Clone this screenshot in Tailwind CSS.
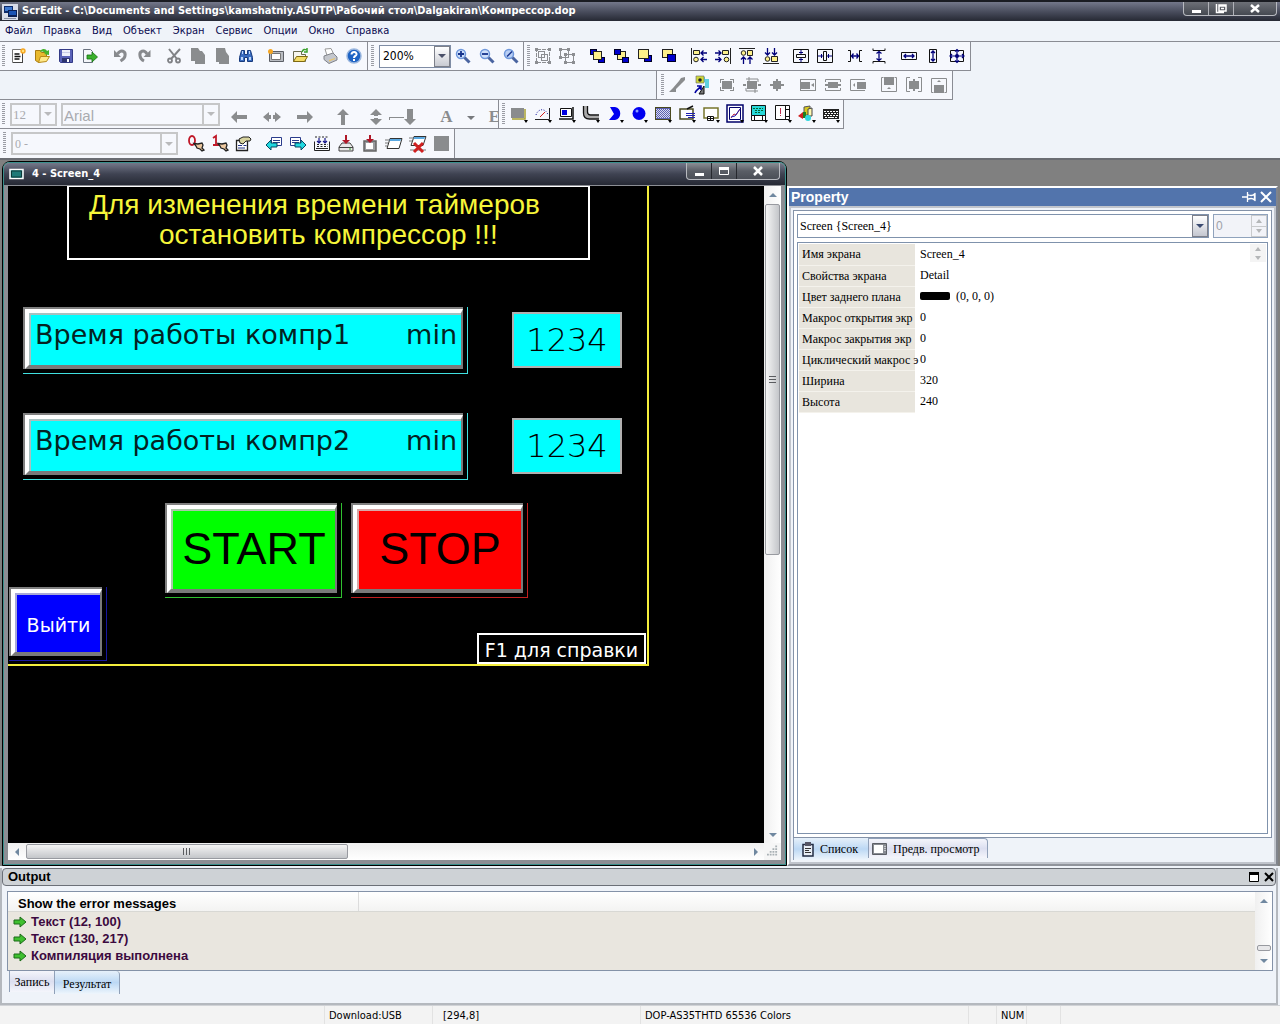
<!DOCTYPE html>
<html lang="ru">
<head>
    <meta charset="UTF-8">
    <meta name="viewport" content="width=device-width, initial-scale=1.0">
    <title>ScrEdit - Компрессор.dop</title>
    <script src="https://cdn.jsdelivr.net/npm/@tailwindcss/browser@4"></script>
</head>
<body class="flex flex-col h-screen overflow-hidden bg-[#eff3f9] font-['DejaVu_Sans_Condensed','DejaVu_Sans',sans-serif] text-[11px] text-black">

    <!-- Title bar -->
    <header class="flex h-[21px] shrink-0 justify-between border-t-2 border-[#1a1c22] bg-linear-to-b from-[#74788a] via-[#4a4e5e] to-[#262934] pl-[2px] pr-[3px]">
        <div class="flex items-center gap-1">
            <svg class="size-4" viewBox="0 0 16 16"><path fill="#d8dce8" d="M0 0h16v16H0z"/><path fill="#0d2b6b" d="M2 2h9v7H2z"/><path fill="#3f79d0" d="M3 3h7v4H3z"/><path fill="#0a1f55" d="M6 6h9v7H6z"/><path fill="#1b54b5" d="M7 7h7v4H7z"/><path fill="#8890a5" d="M2 14h12v1H2z"/></svg>
            <h1 class="font-bold text-white whitespace-nowrap">ScrEdit - C:\Documents and Settings\kamshatniy.ASUTP\Рабочий стол\Dalgakiran\Компрессор.dop</h1>
        </div>
        <div class="flex h-[14px] rounded-b border border-t-0 border-[#b8bac0] bg-linear-to-b from-[#6d7077] to-[#454951] divide-x divide-[#b0b2b8] *:flex *:items-center *:justify-center">
            <button class="w-[25px]" aria-label="Свернуть"><svg class="h-3 w-3" viewBox="0 0 12 12"><path fill="#fff" d="M2 7h9v3H2z"/></svg></button>
            <button class="w-[25px]" aria-label="Восстановить"><svg class="h-3 w-3" viewBox="0 0 12 12"><path fill="none" stroke="#fff" stroke-width="1.5" d="M1.5 1v8.5H9M4 2h7v6H4zM4 3h7M6 5.500h3"/></svg></button>
            <button class="w-[42px]" aria-label="Закрыть"><svg class="h-3 w-3" viewBox="0 0 12 12"><path stroke="#fff" stroke-width="2.500" d="M2 2l8 7M10 2l-8 7"/></svg></button>
        </div>
    </header>

    <!-- Menu -->
    <nav class="flex h-[21px] shrink-0 items-center gap-[11px] border-b border-[#8a8c94] px-[5px] text-[#0a0a50]">
        <a href="#">Файл</a>
        <a href="#">Правка</a>
        <a href="#">Вид</a>
        <a href="#">Объект</a>
        <a href="#">Экран</a>
        <a href="#">Сервис</a>
        <a href="#">Опции</a>
        <a href="#">Окно</a>
        <a href="#">Справка</a>
    </nav>

    <!-- Toolbar row 1 -->
    <div class="flex h-[29px] shrink-0">
        <div class="flex items-center border-r border-b border-[#8a8c94] bg-[#f6f8fd] pl-[6px] relative before:absolute before:left-[2px] before:top-[3px] before:h-[22px] before:w-[3px] before:bg-[repeating-linear-gradient(#9a9ca4_0_1px,transparent_1px_2px)] [&>button]:flex [&>button]:w-6 [&>button]:justify-center [&_svg]:size-4">
            <button title="Новый"><svg viewBox="0 0 16 16"><path fill="#fff" stroke="#777" d="M2.500 1.500h10v13h-10z"/><path stroke="#111" stroke-width="1.300" d="M4.500 6h5M4.500 8.500h6M4.500 11h5"/><path stroke="#444" d="M12.500 4v11M3 14.500h10"/><circle cx="13" cy="3" r="2.700" fill="#f5a623"/><circle cx="13" cy="3" r="1.200" fill="#ffe27a"/></svg></button>
            <button title="Открыть"><svg viewBox="0 0 16 16"><path fill="#e8b92e" stroke="#a87b12" d="M1.500 2.500h5l1 2h5v7l-8 3-3-2z"/><path fill="#ffe98a" stroke="#b88a18" d="M4.500 14.500l2-6h9l-3 5z"/><path fill="#46b32e" d="M6 3c3-3 6-2 7 0l2-1v5l-5-1 1.500-1C10 4 8 3 6 4z"/></svg></button>
            <button title="Сохранить"><svg viewBox="0 0 16 16"><path fill="#5a62b8" stroke="#333a86" d="M1.500 1.500h13v13h-12l-1-1z"/><path fill="#eef0fa" d="M4 2h8v6H4z"/><path fill="#c9cde8" d="M4 4h8v1H4z"/><path fill="#2e356f" d="M4 10h8v4H4z"/><path fill="#fff" d="M9 11h2v3H9z"/></svg></button>
            <button title="Экспорт"><svg viewBox="0 0 16 16"><path fill="#f4f6fa" stroke="#6a7280" d="M1.500 1.500h7l2 2v11h-9z"/><path fill="#3ab02c" stroke="#136e12" stroke-width=".8" d="M5 7h5V4l5.500 5L10 14v-3H5z"/></svg></button>
            <button class="ml-[6px]" title="Отменить"><svg viewBox="0 0 16 16"><path fill="none" stroke="#888a8e" stroke-width="3" d="M5.500 6C9 1 14 3 13 8c-.5 3-3 4-4.500 5"/><path fill="#888a8e" d="M2 2v7h7z"/></svg></button>
            <button title="Вернуть"><svg viewBox="0 0 16 16"><path fill="none" stroke="#888a8e" stroke-width="3" d="M11 6C8 1 3 3 4 8c.5 3 2 4 4 5"/><path fill="#888a8e" d="M14.500 2v7h-7z"/></svg></button>
            <button class="ml-[6px]" title="Вырезать"><svg viewBox="0 0 16 16"><path stroke="#808286" stroke-width="2" d="M3 1l8 10M14 1L5 11"/><circle cx="4" cy="12.500" r="2" fill="none" stroke="#808286" stroke-width="1.800"/><circle cx="12" cy="12.500" r="2" fill="none" stroke="#808286" stroke-width="1.800"/></svg></button>
            <button title="Копировать"><svg viewBox="0 0 16 16"><path fill="#8a8c8e" d="M1 0h7l2 3h2l3 4v9H5v-3H1z"/></svg></button>
            <button title="Вставить"><svg viewBox="0 0 16 16"><path fill="#8a8c8e" d="M2 0h9l1 4 3 4v8H5v-2H2z"/></svg></button>
            <button title="Найти"><svg viewBox="0 0 16 16"><path fill="#3a6cc0" stroke="#173a7d" d="M3.500 2.500h3v4h3v-4h3l2 7v4h-5v-4h-3v4h-5v-4z"/><path fill="#bcd6fa" d="M3 9h2v3H3zM11 9h2v3h-2zM4 3h1v3H4zM11 3h1v3h-1z"/></svg></button>
            <button class="ml-[6px]" title="Новый экран"><svg viewBox="0 0 16 16"><path fill="#b9bcc2" stroke="#5c5f66" d="M1.500 3.500h14v10h-14z"/><path fill="#fff" stroke="#777" d="M3.500 5.500h9v6h-9z"/><circle cx="2.500" cy="3.500" r="2.500" fill="#f5a623"/></svg></button>
            <button title="Открыть экран"><svg viewBox="0 0 16 16"><path fill="#f7f7f0" stroke="#6b6b50" d="M1.500 3.500h8v3h4v7h-12z"/><path fill="#f4dc66" stroke="#806a10" d="M1.500 13.500l3-5h11l-3 5z"/><path fill="none" stroke="#3aa02c" stroke-width="1.500" d="M10 4c1-3 3-3 4-2M15 0v4h-3"/></svg></button>
            <button class="ml-[6px]" title="Печать"><svg viewBox="0 0 16 16"><path fill="#fff" stroke="#999" d="M3 1l6-.5 3 6-7 1z"/><path fill="#c3c6cc" stroke="#80838a" d="M2 8l9-3 4 4v3l-8 3.500-5-4z"/><path fill="#e9c46a" d="M7 12l6-2v1l-6 2.500z"/></svg></button>
            <button class="mr-px" title="Справка"><svg viewBox="0 0 16 16"><circle cx="8" cy="8" r="7" fill="#1d63c4" stroke="#9ab6de" stroke-width="1.500"/><path fill="none" stroke="#fff" stroke-width="2" d="M5.500 6.500C5.500 3 11 3.500 10.500 6.500 10 8 8 8 8 10"/><path fill="#fff" d="M7 11h2v2H7z"/></svg></button>
        </div>
        <div class="flex items-center border-r border-b border-[#8a8c94] bg-[#f6f8fd] pl-[11px] relative before:absolute before:left-[3px] before:top-[3px] before:h-[22px] before:w-[3px] before:bg-[repeating-linear-gradient(#9a9ca4_0_1px,transparent_1px_2px)] [&>button]:flex [&>button]:w-6 [&>button]:justify-center [&_svg]:size-4">
            <div class="flex h-[23px] w-[72px] border border-[#7f8da5] bg-white">
                <select aria-label="Масштаб" class="min-w-0 flex-1 appearance-none bg-transparent px-[3px] text-[12px]"><option>200%</option></select>
                <span class="flex w-4 items-center justify-center border border-[#7d808a] bg-linear-to-b from-white to-[#c9cbd2]"><i class="border-x-4 border-t-4 border-x-transparent border-t-[#4a5068]"></i></span>
            </div>
            <button title="Увеличить"><svg viewBox="0 0 16 16"><circle cx="6" cy="6" r="4.500" fill="#cfe0fa" stroke="#6f98dc" stroke-width="1.500"/><path stroke="#16338c" stroke-width="1.800" d="M3 6h6M6 3v6"/><path stroke="#4a64a0" stroke-width="3" d="M9.500 9.500l5 5"/></svg></button>
            <button title="Уменьшить"><svg viewBox="0 0 16 16"><circle cx="6" cy="6" r="4.500" fill="#cfe0fa" stroke="#6f98dc" stroke-width="1.500"/><path stroke="#16338c" stroke-width="1.800" d="M3 6h6"/><path stroke="#4a64a0" stroke-width="3" d="M9.500 9.500l5 5"/></svg></button>
            <button title="Исходный масштаб"><svg viewBox="0 0 16 16"><circle cx="6" cy="6" r="4.500" fill="#b9cff4" stroke="#6f98dc" stroke-width="1.500"/><path stroke="#16338c" stroke-width="1.500" d="M4 8.500l5-5"/><path stroke="#4a64a0" stroke-width="3" d="M9.500 9.500l5 5"/></svg></button>
        </div>
        <div class="flex items-center border-r border-b border-[#8a8c94] bg-[#f6f8fd] pl-[7px] pr-px relative before:absolute before:left-[3px] before:top-[3px] before:h-[22px] before:w-[3px] before:bg-[repeating-linear-gradient(#9a9ca4_0_1px,transparent_1px_2px)] [&>button]:flex [&>button]:w-6 [&>button]:justify-center [&_svg]:size-4">
            <button title="Группировать"><svg viewBox="0 0 16 16" shape-rendering="crispEdges"><path fill="none" stroke="#8c8e92" d="M1.500 1.500h13v13h-13z" stroke-dasharray="4 1"/><path fill="none" stroke="#8c8e92" d="M3.500 3.500h6v6h-6zM6.500 6.500h6v6h-6z"/><path fill="#8c8e92" d="M0 0h3v3H0zM13 0h3v3h-3zM0 13h3v3H0zM13 13h3v3h-3z"/></svg></button>
            <button title="Разгруппировать"><svg viewBox="0 0 16 16" shape-rendering="crispEdges"><path fill="none" stroke="#8c8e92" d="M1.500 1.500h8v8h-8zM6.500 6.500h8v8h-8z"/><path fill="#8c8e92" d="M0 0h3v3H0zM8 0h3v3H8zM0 8h3v3H0zM5 5h3v3H5zM13 5h3v3h-3zM5 13h3v3H5zM13 13h3v3h-3z"/></svg></button>
            <button class="ml-[6px]" title="На передний план"><svg viewBox="0 0 16 16" shape-rendering="crispEdges"><path fill="#00c" stroke="#002" d="M1.500 1.500h6v5h-6zM9.500 9.500h6v5h-6z"/><path fill="#fdf08a" stroke="#222" d="M4.500 3.500h8v8h-8z"/></svg></button>
            <button title="На задний план"><svg viewBox="0 0 16 16" shape-rendering="crispEdges"><path fill="#fdf08a" stroke="#222" d="M4.500 3.500h8v8h-8z"/><path fill="#00c" stroke="#002" d="M1.500 1.500h6v5h-6zM9.500 9.500h6v5h-6z"/></svg></button>
            <button title="Переместить вперёд"><svg viewBox="0 0 16 16" shape-rendering="crispEdges"><path fill="#00c" stroke="#002" d="M7.500 7.500h7v6h-7z"/><path fill="#fdf08a" stroke="#222" d="M1.500 1.500h10v9h-10z"/></svg></button>
            <button title="Переместить назад"><svg viewBox="0 0 16 16" shape-rendering="crispEdges"><path fill="#fdf08a" stroke="#222" d="M1.500 1.500h10v8h-10z"/><path fill="#00c" stroke="#002" d="M6.500 6.500h8v7h-8z"/></svg></button>
            <button class="ml-[6px]" title="По левому краю"><svg viewBox="0 0 16 16"><path fill="none" stroke="#222" shape-rendering="crispEdges" d="M.5 0v16"/><path fill="#fdf08a" stroke="#222" d="M2.500 2.500h6v4h-6z"/><circle cx="5" cy="11.500" r="2.300" fill="#fdf08a" stroke="#222"/><path fill="none" stroke="#00007a" stroke-width="1.300" d="M10 5h6M12.500 2.500L10 5l2.500 2.500M10 11.500h6M12.500 9L10 11.500l2.500 2.500"/></svg></button>
            <button title="По правому краю"><svg viewBox="0 0 16 16"><path fill="none" stroke="#222" shape-rendering="crispEdges" d="M15.500 0v16"/><path fill="#fdf08a" stroke="#222" d="M7.500 2.500h6v4h-6z"/><circle cx="11.500" cy="11.500" r="2.300" fill="#fdf08a" stroke="#222"/><path fill="none" stroke="#00007a" stroke-width="1.300" d="M0 5h6M3.500 2.500L6 5 3.500 7.500M0 11.500h6M3.500 9L6 11.500 3.500 14"/></svg></button>
            <button title="По верхнему краю"><svg viewBox="0 0 16 16"><path stroke="#222" shape-rendering="crispEdges" d="M0 .5h16"/><circle cx="4.500" cy="5" r="2.300" fill="#fdf08a" stroke="#222"/><path fill="#fdf08a" stroke="#222" d="M8.500 2.500h5v5h-5z"/><path fill="none" stroke="#00007a" stroke-width="1.300" d="M4.500 9v7M2 11.500L4.500 9 7 11.500M11 9v7M8.500 11.500L11 9l2.500 2.500"/></svg></button>
            <button title="По нижнему краю"><svg viewBox="0 0 16 16"><path stroke="#222" shape-rendering="crispEdges" d="M0 15.500h16"/><circle cx="4.500" cy="11" r="2.300" fill="#fdf08a" stroke="#222"/><path fill="#fdf08a" stroke="#222" d="M8.500 8.500h6v5h-6z"/><path fill="none" stroke="#00007a" stroke-width="1.300" d="M4.500 0v7M2 4.500L4.500 7 7 4.500M11.500 0v7M9 4.500L11.500 7 14 4.500"/></svg></button>
            <button class="ml-[6px]" title="Центр по вертикали"><svg viewBox="0 0 16 16"><path fill="none" stroke="#111" d="M.5 1.500h15v13H.5zM3.500 6.500h9v3h-9z"/><path stroke="#00007a" d="M8 2v4M6 4.500h4M8 10v4M6 11.500h4"/></svg></button>
            <button title="Центр по горизонтали"><svg viewBox="0 0 16 16"><path fill="none" stroke="#111" d="M.5 1.500h15v13H.5zM6.500 3.500h3v9h-3z"/><path stroke="#00007a" d="M1 8h5M4.500 6v4M10 8h5M11.500 6v4"/></svg></button>
            <button class="ml-[6px]" title="Интервал по горизонтали"><svg viewBox="0 0 16 16"><path fill="none" stroke="#111" d="M1 2.500h2.500v11H1M15 2.500h-2.500v11H15"/><path fill="none" stroke="#00007a" stroke-width="1.300" d="M4 8h8M6.500 5.500L4.500 8l2 2.500M9.500 5.500l2 2.500-2 2.500"/></svg></button>
            <button title="Интервал по вертикали"><svg viewBox="0 0 16 16"><path fill="none" stroke="#111" d="M2 .5v2h12v-2M2 15.500v-2h12v2"/><path fill="none" stroke="#00007a" stroke-width="1.300" d="M8 3v10M5.500 5.500L8 3.500l2.500 2M5.500 10.500l2.500 2 2.500-2"/></svg></button>
            <button class="ml-[6px]" title="Одинаковая ширина"><svg viewBox="0 0 16 16"><path fill="none" stroke="#111" d="M.5 4.500h15v7H.5z"/><path fill="none" stroke="#00007a" stroke-width="1.300" d="M3 8h10M5 6L3 8l2 2M11 6l2 2-2 2"/></svg></button>
            <button title="Одинаковая высота"><svg viewBox="0 0 16 16"><path fill="none" stroke="#111" d="M4.500 1.500h7v13h-7z"/><path fill="none" stroke="#00007a" stroke-width="1.300" d="M8 3v10M6 5l2-2 2 2M6 11l2 2 2-2"/></svg></button>
            <button title="Одинаковый размер"><svg viewBox="0 0 16 16"><path fill="none" stroke="#111" d="M1.500 2.500h13v11h-13z"/><path fill="none" stroke="#00007a" stroke-width="1.200" d="M.5 8h15M3 6L1 8l2 2M13 6l2 2-2 2M8 1v14M6 3.500l2-2 2 2M6 12.500l2 2 2-2"/><circle cx="8" cy="8" r="2" fill="#00007a"/></svg></button>
        </div>
    </div>

    <!-- Toolbar row 2 -->
    <div class="flex h-[29px] shrink-0">
        <div class="w-[656px] border-b border-[#8a8c94]"></div>
        <div class="flex items-center border-x border-b border-[#8a8c94] bg-[#f6f8fd] pl-[7px] pr-px relative before:absolute before:left-[4px] before:top-[3px] before:h-[22px] before:w-[3px] before:bg-[repeating-linear-gradient(#9a9ca4_0_1px,transparent_1px_2px)] [&>button]:flex [&>button]:w-[25px] [&>button]:justify-center [&_svg]:size-4 [&_svg]:overflow-visible">
            <button title="Заливка"><svg viewBox="0 0 16 16"><path fill="#8a8c8e" d="M0 15l4-4 6-7 2-3 4-1v3l-3 3-6 6v3z"/></svg></button>
            <button title="Макрос"><svg viewBox="0 0 16 16"><path fill="#5fd0e0" d="M4 0h7v5H4zM11 2h4v9h-4z"/><path fill="#cfd83a" stroke="#666" stroke-width=".6" d="M2-1h8v7H2z"/><circle cx="6" cy="3" r="1.800" fill="#222"/><path fill="#777" stroke="#111" d="M5 17h5V9z"/><path fill="none" stroke="#0000a0" stroke-width="1.600" d="M1 16c1-3 3-3 5-6M3 9h4v4"/></svg></button>
            <button title="Обрезать"><svg viewBox="0 0 16 16"><path fill="#8a8c8e" d="M3 4h10v8H3zM1 2h4v1H2v3H1zM15 2h-4v1h3v3h1zM1 14h4v-1H2v-3H1zM15 14h-4v-1h3v-3h1z"/></svg></button>
            <button title="Повернуть"><svg viewBox="0 0 16 16"><path fill="#8a8c8e" d="M3 4h10v8H3zM-1 7h3v2h-3zM14 7h3v2h-3z"/><path stroke="#8a8c8e" fill="none" d="M2 2h12v3M14 14H2v-3M5 0v4M11 16v-4"/></svg></button>
            <button title="Подогнать"><svg viewBox="0 0 16 16"><path fill="#8a8c8e" d="M4 4h8v8H4zM1 7h14v2H1zM7 2h2v12H7z"/></svg></button>
            <button class="ml-[6px]" title="Влево"><svg viewBox="0 0 16 16"><path fill="none" stroke="#8a8c8e" d="M.5 2.500h15M.5 13.500h15M15.500 2v12M.5 2v12"/><path fill="#8a8c8e" d="M1 5h9v7H1zM11 8l3-2v4z"/></svg></button>
            <button title="По центру"><svg viewBox="0 0 16 16"><path fill="none" stroke="#8a8c8e" d="M.5 5V2.500h15V5M.5 11v2.500h15V11"/><path fill="#8a8c8e" d="M3 5h10v6H3zM0 7h16v2H0z"/></svg></button>
            <button title="Вправо"><svg viewBox="0 0 16 16"><path fill="none" stroke="#8a8c8e" d="M15 2.500H.5v11H15"/><path fill="#8a8c8e" d="M7 5h9v7H7zM3 8l2-2v4z"/></svg></button>
            <button class="ml-[6px]" title="Вверх"><svg viewBox="0 0 16 16"><path fill="none" stroke="#8a8c8e" d="M2.500.5h-2v14h15V.5h-2"/><path fill="#8a8c8e" d="M3 0h10v8H3zM6 12l2-2 2 2z"/></svg></button>
            <button title="Посередине"><svg viewBox="0 0 16 16"><path fill="none" stroke="#8a8c8e" d="M4 .5H.5v14H4M12 .5h3.500v14H12"/><path fill="#8a8c8e" d="M3 4h10v8H3zM7 2h2v12H7z"/></svg></button>
            <button title="Вниз"><svg viewBox="0 0 16 16"><path fill="none" stroke="#8a8c8e" d="M2.500 15.500h-2V1.500h15v14h-2"/><path fill="#8a8c8e" d="M3 8h10v8H3zM6 5l2-2 2 2z"/></svg></button>
        </div>
    </div>

    <!-- Toolbar row 3 -->
    <div class="flex h-[29px] shrink-0">
        <div class="flex w-[499px] items-center overflow-hidden border-r border-b border-[#8a8c94] bg-[#f6f8fd] pl-[10px] relative before:absolute before:left-[2px] before:top-[3px] before:h-[22px] before:w-[3px] before:bg-[repeating-linear-gradient(#9a9ca4_0_1px,transparent_1px_2px)] [&>button]:flex [&>button]:w-[33px] [&>button]:shrink-0 [&>button]:justify-center [&>button]:pt-[6px] [&_svg]:size-4 [&_svg]:overflow-visible">
            <div class="flex h-[23px] w-[47px] shrink-0 border-2 border-[#c6c7c8]">
                <select disabled aria-label="Размер шрифта" class="min-w-0 flex-1 appearance-none px-px font-['Liberation_Serif',serif] text-[13px] text-[#a9abb0]"><option>12</option></select>
                <span class="flex w-4 items-center justify-center border-l-2 border-[#c6c7c8]"><i class="border-x-4 border-t-4 border-x-transparent border-t-[#b9babc]"></i></span>
            </div>
            <div class="ml-1 mr-[2px] flex h-[23px] w-[159px] shrink-0 border-2 border-[#c6c7c8]">
                <select disabled aria-label="Шрифт" class="min-w-0 flex-1 appearance-none px-px font-['Liberation_Sans',sans-serif] text-[15px] text-[#a9abb0]"><option>Arial</option></select>
                <span class="flex w-4 items-center justify-center border-l-2 border-[#c6c7c8]"><i class="border-x-4 border-t-4 border-x-transparent border-t-[#b9babc]"></i></span>
            </div>
            <button title="Влево"><svg viewBox="0 0 16 16"><path fill="#8a8c8e" d="M0 8l6-6v4h10v4H6v4z"/></svg></button>
            <button title="По центру"><svg viewBox="0 0 16 16"><path fill="#8a8c8e" d="M-1 8l6-5v3h2v4H5v3zM17 8l-6-5v3H9v4h2v3z"/></svg></button>
            <button title="Вправо"><svg viewBox="0 0 16 16"><path fill="#8a8c8e" d="M16 8l-6-6v4H0v4h10v4z"/></svg></button>
            <button class="ml-[5px]" title="Вверх"><svg viewBox="0 0 16 16"><path fill="#8a8c8e" d="M8 0l6 6h-4v10H6V6H2z"/></svg></button>
            <button title="Посередине"><svg viewBox="0 0 16 16"><path fill="#8a8c8e" d="M8 0l6 6h-4v1H6V6H2zM8 16l6-6h-4V9H6v1H2z"/></svg></button>
            <button title="Вниз"><svg viewBox="0 0 16 16"><path fill="#8a8c8e" d="M9 16l6-6h-3V0H6v10H3zM-12 8H3v1h-14v2h-1z"/></svg></button>
            <button class="ml-[5px] font-['Liberation_Serif',serif] text-[17px]/5 font-bold text-[#8a8c8e]" title="Цвет текста">A</button>
            <button class="-mx-[9px]" title="Палитра"><i class="mt-[2px] border-x-4 border-t-4 border-x-transparent border-t-[#77797d]"></i></button>
            <button class="font-['Liberation_Serif',serif] text-[17px]/5 font-bold text-[#8a8c8e]" title="Выравнивание">E</button>
        </div>
        <div class="flex items-center border-r border-b border-[#8a8c94] bg-[#f6f8fd] pl-2 relative before:absolute before:left-[3px] before:top-[3px] before:h-[22px] before:w-[3px] before:bg-[repeating-linear-gradient(#9a9ca4_0_1px,transparent_1px_2px)] [&>button]:relative [&>button]:flex [&>button]:w-6 [&>button]:justify-center [&_svg]:size-4 [&_svg]:overflow-visible [&_i]:absolute [&_i]:-bottom-px [&_i]:right-[3px] [&_i]:border-x-2 [&_i]:border-t-3 [&_i]:border-x-transparent [&_i]:border-t-black">
            <button title="Кнопка"><svg viewBox="0 0 16 16"><path fill="#8a8c8e" d="M0 2h13v10H0z"/><path fill="none" stroke="#a8a030" stroke-width="1.500" d="M1 13h13V3"/></svg><i></i></button>
            <button title="Прибор"><svg viewBox="0 0 16 16"><path fill="none" stroke="#222" d="M0 13.500h14.500V2"/><path fill="none" stroke="#2020a0" stroke-dasharray="1 1.500" d="M1 9c2-7 10-7 12 0"/><path stroke="#d02020" d="M5 11l5-5"/></svg><i></i></button>
            <button title="Индикатор"><svg viewBox="0 0 16 16"><path fill="#fff" stroke="#111" d="M1.500 2.500h11v8h-11z"/><path fill="#0000e0" d="M3 4h5v5H3z"/><path fill="none" stroke="#111" stroke-width="1.500" d="M0 13h14V1"/></svg><i></i></button>
            <button title="Труба"><svg viewBox="0 0 16 16"><path fill="none" stroke="#aaa" stroke-width="3" d="M2.500 0v7c0 3 1.500 4 4 4H16"/><path fill="none" stroke="#111" stroke-width="1.300" d="M.5 0v7c0 4 2 6 6 6H16M4.500 0v6c0 2 1 3 3 3H16"/></svg><i></i></button>
            <button title="Сектор"><svg viewBox="0 0 16 16"><path fill="#0000f0" d="M3 1h5c7 1 7 12 0 13H2l5-6z"/></svg><i></i></button>
            <button title="Круг"><svg viewBox="0 0 16 16"><circle cx="8" cy="7.500" r="6.500" fill="#0000f0"/><circle cx="6" cy="5" r="1.500" fill="#8a9cff"/></svg><i></i></button>
            <button title="Фон"><svg viewBox="0 0 16 16" shape-rendering="crispEdges"><path fill="#5a5fae" stroke="#4a4a20" d="M.5 1.500h15v12H.5z"/><path fill="none" stroke="#d9dbf2" stroke-dasharray="1 1" d="M1 3.500h14M2 4.500h13M1 5.500h14M2 6.500h13M1 7.500h14M2 8.500h13M1 9.500h14M2 10.500h13M1 11.500h14"/></svg><i></i></button>
            <button title="Ввод"><svg viewBox="0 0 16 16"><path fill="#fff" stroke="#4a4a20" stroke-width="1.500" d="M1 3h13v10H1z"/><path stroke="#111" stroke-width="1.500" d="M8 3l6-3"/><path stroke="#2020b0" d="M7 7.500h9M7 9.500h9M9 11.500h7"/></svg><i></i></button>
            <button title="Дисплей"><svg viewBox="0 0 16 16"><path fill="#fff" stroke="#77752c" stroke-width="1.500" d="M1 2h14v10H1z"/><path fill="#fff" stroke="#111" d="M4.500 10.500h6v4h-6zM4 12.500h7M7.500 11v3"/></svg><i></i></button>
            <button title="График"><svg viewBox="0 0 16 16"><path fill="#fff" stroke="#00006a" stroke-width="1.500" d="M0-1h16v17H0z"/><path fill="none" stroke="#00006a" d="M2.500 1.500h11v12h-11z"/><path fill="none" stroke="#c02040" d="M4 12l3-4 2 1 4-6"/><path fill="none" stroke="#2020b0" d="M4 11l4-1 5-7"/></svg><i></i></button>
            <button title="Тревоги"><svg viewBox="0 0 16 16"><path fill="#28d8d8" stroke="#111" d="M.5-.5h14v10H.5z"/><path stroke="#063" stroke-dasharray="2 1" d="M2 2.500h10M4 4.500h8M4 6.500h6"/><path fill="#fff" stroke="#111" d="M.5 9.500h14v5H.5zM3.500 10v4M11.500 10v4"/></svg><i></i></button>
            <button title="Таблица"><svg viewBox="0 0 16 16"><path fill="#fff" stroke="#111" d="M.5-.5h14v14H.5zM10.500 0v13M10.500 3.500h4M10.500 10.500h4"/><path stroke="#c03050" stroke-dasharray="6 1 1" d="M5.500 2v9"/></svg><i></i></button>
            <button title="Рисунок"><svg viewBox="0 0 16 16"><path fill="#d8c820" stroke="#555" d="M5 1l6-1v9H5z"/><path fill="#fff8b0" stroke="#444" d="M9 3l4-1v8H9z"/><path fill="#d02020" d="M-1 10l5-4v7z"/><path fill="#208020" d="M4 6h3v6H4z"/><circle cx="9" cy="12" r="3" fill="#30d8e0"/></svg><i></i></button>
            <button title="Клавиатура"><svg viewBox="0 0 16 16" shape-rendering="crispEdges"><path fill="#222" d="M0 3h16v10H0z"/><path stroke="#fff" stroke-dasharray="2 1" d="M1 5.500h14M2 7.500h13M1 9.500h14"/><path stroke="#fff" d="M2 11.500h2M5 11.500h6M12 11.500h2"/></svg><i></i></button>
        </div>
    </div>

    <!-- Toolbar row 4 -->
    <div class="flex h-[29px] shrink-0">
        <div class="flex items-center border-r border-[#8a8c94] bg-[#f6f8fd] pl-[11px] relative before:absolute before:left-[3px] before:top-[3px] before:h-[22px] before:w-[3px] before:bg-[repeating-linear-gradient(#9a9ca4_0_1px,transparent_1px_2px)] [&>button]:flex [&>button]:w-6 [&>button]:justify-center [&_svg]:size-4 [&_svg]:overflow-visible">
            <div class="mr-[6px] flex h-[23px] w-[167px] border-2 border-[#c6c7c8]">
                <select disabled aria-label="Состояние" class="min-w-0 flex-1 appearance-none px-[2px] font-['Liberation_Serif',serif] text-[12px] text-[#a9abb0]"><option>0 -</option></select>
                <span class="flex w-4 items-center justify-center border-l-2 border-[#c6c7c8]"><i class="border-x-4 border-t-4 border-x-transparent border-t-[#b9babc]"></i></span>
            </div>
            <button title="Состояние 0"><svg viewBox="0 0 16 16"><ellipse cx="4" cy="4.500" rx="3" ry="4.500" fill="none" stroke="#c01828" stroke-width="1.800"/><path fill="#eec9a0" stroke="#222" stroke-width="1.300" d="M6 7.500l4 .5 4-1 1 2-1 3 2 2-2 1-2-2-3-1-1-2z"/></svg></button>
            <button title="Состояние 1"><svg viewBox="0 0 16 16"><path fill="none" stroke="#c01828" stroke-width="1.800" d="M1 2l3-2v9M1 9h6"/><path fill="#eec9a0" stroke="#222" stroke-width="1.300" d="M6 7.500l4 .5 4-1 1 2-1 3 2 2-2 1-2-2-3-1-1-2z"/></svg></button>
            <button title="Свойства"><svg viewBox="0 0 16 16"><path fill="#fff" stroke="#222" stroke-width="1.300" d="M.5 4.500h11v10H.5z"/><path stroke="#24358a" d="M2 9.500h4M2 12h7M7.500 9.500h3"/><path fill="#d8d4a0" stroke="#222" d="M3 3l4-2h6l2 2-1 2h-4l-3 3-3-1z"/></svg></button>
            <button class="ml-[6px]" title="Предыдущий экран"><svg viewBox="0 0 16 16"><path fill="#fff" stroke="#2a3c8c" d="M5.500 1.500h10v8h-10z"/><path stroke="#2a3c8c" d="M7 4.500h7M7 6.500h7"/><path fill="#20d8e0" stroke="#064860" d="M0 9l5-5v3h6v4H5v3z"/></svg></button>
            <button title="Следующий экран"><svg viewBox="0 0 16 16"><path fill="#fff" stroke="#2a3c8c" d="M.5 1.500h10v8H.5z"/><path stroke="#2a3c8c" d="M2 4.500h7M2 6.500h7"/><path fill="#20d8e0" stroke="#064860" d="M16 9l-5-5v3H5v4h6v3z"/></svg></button>
            <button title="Компилировать"><svg viewBox="0 0 16 16"><path stroke="#222" stroke-dasharray="2 1.500" d="M1 1h14M3 8.500h11M3 10.500h11"/><path fill="none" stroke="#222" d="M.5 5.500v9h15v-9M2 12.500h12"/><path fill="none" stroke="#16168a" stroke-width="1.200" d="M5 2v5M3 5l2 2 2-2M11 2v5M9 5l2 2 2-2"/></svg></button>
            <button title="Загрузить всё"><svg viewBox="0 0 16 16"><path fill="#e8e8e8" stroke="#444" d="M1 11l3-4h8l3 4v4H1zM1 11.500h14"/><path fill="#20a020" d="M11 12.500h2v1h-2z"/><path fill="#b01828" d="M7-1h2v5h3L8 8 4 4h3z"/></svg></button>
            <button title="Загрузить экран"><svg viewBox="0 0 16 16"><path fill="#999b9f" stroke="#666" stroke-width="1.500" d="M2 5h12v10H2z"/><path fill="#fff" d="M4 7h7v6H4z"/><path fill="#b01828" d="M7-1h2v4h3L8 7 4 3h3z"/></svg></button>
            <button title="Онлайн"><svg viewBox="0 0 16 16"><path fill="#fff" stroke="#333" d="M4 2.500h12l-3 10H1z"/><path fill="#5aa8e0" d="M4 3h11l-.6 2H3.500z"/><path stroke="#777" d="M-1 4h4M-1 7h3M-1 10h2"/></svg></button>
            <button title="Остановить"><svg viewBox="0 0 16 16"><path fill="#fff" stroke="#333" d="M4 .5h12l-3 9H1z"/><path fill="#5aa8e0" d="M4 1h11l-.6 2H3.500z"/><path stroke="#777" d="M-1 2h4M-1 5h3M0 14h16"/><path stroke="#d02020" stroke-width="3" d="M4 7l9 9M13 7l-9 9"/></svg></button>
            <button title="Стоп"><svg viewBox="0 0 16 16"><path fill="#8a8c8e" d="M0 0h15v15H0z"/></svg></button>
        </div>
    </div>

    <!-- Workspace -->
    <main class="flex min-h-0 flex-1 border-t-2 border-[#6a6d73] bg-[#808080]">

        <!-- Screen editor window -->
        <section class="ml-[2px] mt-px flex min-w-0 flex-1 flex-col rounded-t-lg border border-black bg-[#8c8e94]">
            <div class="flex min-h-0 flex-1 flex-col rounded-t-md border border-[#3a8f8c] bg-[#8c8e94]">
                <div class="flex h-[22px] shrink-0 justify-between rounded-t-md bg-linear-to-b from-[#74788a] via-[#3f4352] to-[#262934] pl-[5px] pr-[5px]">
                    <div class="flex items-center gap-2">
                        <svg class="h-3 w-[15px]" viewBox="0 0 15 12"><path fill="#1e7a78" stroke="#fff" stroke-width="1.500" d="M1 1.500h13v9H1z"/><path fill="none" stroke="#0c3a3a" d="M2.500 3h10v6h-10z"/></svg>
                        <h2 class="font-bold text-white">4 - Screen_4</h2>
                    </div>
                    <div class="flex h-[17px] rounded-b border border-t-0 border-[#b8bac0] bg-linear-to-b from-[#8b8e95] via-[#5a5e66] to-[#4b4f57] divide-x divide-[#26282e] *:flex *:items-center *:justify-center">
                        <button class="w-[25px]" aria-label="Свернуть окно"><svg class="h-3 w-3" viewBox="0 0 12 12"><path fill="#fff" d="M2 8h9v3H2z"/></svg></button>
                        <button class="w-[25px]" aria-label="Развернуть окно"><svg class="h-3 w-3" viewBox="0 0 12 12"><path fill="none" stroke="#fff" d="M1.500 2.500h9v7h-9z"/><path fill="#fff" d="M1 2h10v3H1z"/></svg></button>
                        <button class="w-[42px]" aria-label="Закрыть окно"><svg class="h-3 w-3" viewBox="0 0 12 12"><path stroke="#fff" stroke-width="2.500" d="M2 2l8 8M10 2l-8 8"/></svg></button>
                    </div>
                </div>
                <div class="mx-1 mb-1 grid min-h-0 flex-1 grid-cols-[1fr_17px] grid-rows-[1fr_17px] border-t border-[#8c8e94]">

                    <!-- Operator panel canvas -->
                    <div class="relative overflow-hidden bg-black font-['DejaVu_Sans',sans-serif]">
                        <div class="absolute left-0 top-0 h-[480px] w-[641px] border-r-2 border-b-2 border-[#f4ee3c]"></div>
                        <p class="absolute left-[59px] -top-px h-[75px] w-[523px] border-2 border-white pl-[20px] pt-[3px] font-['Liberation_Sans',sans-serif] text-[28px]/[30px] whitespace-pre text-[#f6f63a]">Для изменения времени таймеров
         остановить компрессор !!!</p>

                        <label for="time1" class="absolute left-[15px] top-[121px] h-[67px] w-[445px] border-r border-b border-[#40e0e0] pb-1 pr-1">
                            <span class="block h-full border-l-2 border-t-2 border-[#808080]">
                                <span class="block h-full border-4 border-r-2 border-[#7a7a7a] border-l-white border-t-white">
                                    <span class="flex h-full justify-between border-l-2 border-t-2 border-[#a8c0c0] bg-[#00ffff] pl-1 pr-1 text-[27px]/[40px] text-[#042222]"><span>Время работы компр1</span><span>min</span></span>
                                </span>
                            </span>
                        </label>
                        <input id="time1" value="1234" class="absolute left-[504px] top-[126px] h-[56px] w-[110px] border-2 border-[#b0b0b0] bg-[#00ffff] text-center text-[32px] font-extralight text-black">

                        <label for="time2" class="absolute left-[15px] top-[227px] h-[67px] w-[445px] border-r border-b border-[#40e0e0] pb-1 pr-1">
                            <span class="block h-full border-l-2 border-t-2 border-[#808080]">
                                <span class="block h-full border-4 border-r-2 border-[#7a7a7a] border-l-white border-t-white">
                                    <span class="flex h-full justify-between border-l-2 border-t-2 border-[#a8c0c0] bg-[#00ffff] pl-1 pr-1 text-[27px]/[40px] text-[#042222]"><span>Время работы компр2</span><span>min</span></span>
                                </span>
                            </span>
                        </label>
                        <input id="time2" value="1234" class="absolute left-[504px] top-[232px] h-[56px] w-[110px] border-2 border-[#b0b0b0] bg-[#00ffff] text-center text-[32px] font-extralight text-black">

                        <button class="absolute left-[157px] top-[317px] h-[95px] w-[177px] border-r border-b border-[#30c030] pb-1 pr-1">
                            <span class="block h-full border-l-2 border-t-2 border-[#808080]">
                                <span class="block h-full border-4 border-r-2 border-[#7a7a7a] border-l-white border-t-white">
                                    <span class="block h-full border-l-2 border-t-2 border-[#a8c8a8] bg-[#00ff00] text-center font-['Liberation_Sans',sans-serif] text-[45px]/[76px]">START</span>
                                </span>
                            </span>
                        </button>
                        <button class="absolute left-[343px] top-[317px] h-[95px] w-[177px] border-r border-b border-[#c02020] pb-1 pr-1">
                            <span class="block h-full border-l-2 border-t-2 border-[#808080]">
                                <span class="block h-full border-4 border-r-2 border-[#7a7a7a] border-l-white border-t-white">
                                    <span class="block h-full border-l-2 border-t-2 border-[#d8a8a8] bg-[#ff0000] text-center font-['Liberation_Sans',sans-serif] text-[45px]/[76px]">STOP</span>
                                </span>
                            </span>
                        </button>
                        <button class="absolute left-px top-[401px] h-[74px] w-[98px] border-r border-b border-[#1818a0] pb-1 pr-1">
                            <span class="block h-full border-l-2 border-t-2 border-[#808080]">
                                <span class="block h-full border-4 border-r-2 border-[#7a7a7a] border-l-white border-t-white">
                                    <span class="block h-full border-l-2 border-t-2 border-[#a8a8d8] bg-[#0000ff] text-center text-[19px]/[60px] text-white">Выйти</span>
                                </span>
                            </span>
                        </button>
                        <p class="absolute left-[469px] top-[447px] h-[31px] w-[169px] border-2 border-white text-center text-[19px]/[30px] whitespace-nowrap text-white">F1 для справки</p>
                    </div>

                    <!-- Vertical scroll -->
                    <div class="flex flex-col bg-linear-to-r from-[#f0f0f0] to-white">
                        <button class="flex h-[18px] items-center justify-center" aria-label="Вверх"><i class="border-x-4 border-b-4 border-x-transparent border-b-[#7088a0]"></i></button>
                        <div class="mx-px flex h-[351px] items-center justify-center rounded-xs border border-[#989aa0] bg-linear-to-r from-[#f5f5f5] to-[#c4c6ca]"><i class="h-2 w-[7px] bg-[repeating-linear-gradient(#5a5c60_0_1px,transparent_1px_3px)]"></i></div>
                        <button class="mt-auto flex h-[17px] items-center justify-center" aria-label="Вниз"><i class="border-x-4 border-t-4 border-x-transparent border-t-[#7088a0]"></i></button>
                    </div>
                    <!-- Horizontal scroll -->
                    <div class="flex bg-linear-to-b from-[#f0f0f0] to-white">
                        <button class="flex w-[18px] items-center justify-center" aria-label="Влево"><i class="border-y-4 border-r-4 border-y-transparent border-r-[#7088a0]"></i></button>
                        <div class="my-px flex w-[322px] items-center justify-center rounded-xs border border-[#989aa0] bg-linear-to-b from-[#f5f5f5] to-[#c4c6ca]"><i class="h-[7px] w-2 bg-[repeating-linear-gradient(90deg,#5a5c60_0_1px,transparent_1px_3px)]"></i></div>
                        <button class="ml-auto flex w-[17px] items-center justify-center" aria-label="Вправо"><i class="border-y-4 border-l-4 border-y-transparent border-l-[#7088a0]"></i></button>
                    </div>
                    <div class="flex items-end justify-end bg-[#f6f6f6] p-[3px]">
                        <svg class="size-3" viewBox="0 0 12 12"><path fill="#a8b0b4" d="M9 0h2v2H9zM9 3h2v2H9zM9 6h2v2H9zM9 9h2v2H9zM6 3h2v2H6zM6 6h2v2H6zM6 9h2v2H6zM3 6h2v2H3zM3 9h2v2H3zM0 9h2v2H0z"/></svg>
                    </div>
                </div>
            </div>
        </section>

        <!-- Property panel -->
        <aside class="mt-[26px] mr-[2px] flex w-[491px] shrink-0 flex-col border-2 border-b-[#90949c] border-l-white border-r-[#80848c] border-t-white bg-[#eff3f9]">
            <div class="flex h-[18px] shrink-0 items-center justify-between bg-[#5274ac] pl-[2px] pr-1">
                <h2 class="font-['Liberation_Sans',sans-serif] text-[14px] font-bold text-white">Property</h2>
                <div class="flex items-center gap-1">
                    <button aria-label="Закрепить"><svg class="h-3 w-[14px]" viewBox="0 0 14 12"><path fill="none" stroke="#fff" stroke-width="1.300" d="M0 6h5M5.500 1v10M5.500 3.500c3 1.500 5 1.500 7-.5v6c-2-2-4-2-7-.5M13 2v8"/></svg></button>
                    <button aria-label="Закрыть панель"><svg class="h-3 w-3" viewBox="0 0 12 12"><path stroke="#fff" stroke-width="2" d="M1 1l10 10M11 1L1 11"/></svg></button>
                </div>
            </div>
            <div class="flex min-h-0 flex-1 flex-col border-x-2 border-t-2 border-b-2 border-[#c0c4cc] px-[2px] pt-[2px]">
                <div class="flex min-h-0 flex-1 flex-col gap-1 border border-[#8492a8] bg-white p-[3px]">
                    <div class="flex h-[24px] shrink-0 gap-1 text-[12px]">
                        <div class="flex flex-1 border border-[#7f92ac]">
                            <select aria-label="Объект" class="min-w-0 flex-1 appearance-none px-[2px] font-['Liberation_Serif',serif]"><option>Screen {Screen_4}</option></select>
                            <span class="flex w-4 items-center justify-center border border-[#7d808a] bg-linear-to-b from-white to-[#c4c7d0]"><i class="border-x-4 border-t-4 border-x-transparent border-t-[#3a4a70]"></i></span>
                        </div>
                        <div class="flex w-[55px] border border-[#8fa2bc] bg-[#f2f3f8]">
                            <input disabled aria-label="Состояние объекта" value="0" class="min-w-0 flex-1 pl-[2px] font-['Liberation_Sans',sans-serif] text-[#a0a2a8]">
                            <span class="flex w-4 flex-col divide-y divide-[#c8cacc] border border-[#c8cacc] *:flex *:flex-1 *:items-center *:justify-center">
                                <span><i class="border-x-3 border-b-4 border-x-transparent border-b-[#b4b6b8]"></i></span>
                                <span><i class="border-x-3 border-t-4 border-x-transparent border-t-[#b4b6b8]"></i></span>
                            </span>
                        </div>
                    </div>
                    <div class="flex min-h-0 flex-1 items-start border border-[#7f92ac] p-px">
                        <table class="w-full table-fixed border-collapse font-['Liberation_Serif',serif] text-[12px] [&_td]:h-[21px] [&_td]:py-0 [&_td]:pb-[2px] [&_td]:pl-[5px] [&_th]:h-[21px] [&_th]:w-[116px] [&_th]:border-b [&_th]:border-[#f4f2ec] [&_th]:bg-[#e8e5dd] [&_th]:py-0 [&_th]:pl-[3px] [&_th]:text-left [&_th]:font-normal [&_th]:whitespace-nowrap">
                            <tr><th>Имя экрана</th><td>Screen_4</td></tr>
                            <tr><th>Свойства экрана</th><td>Detail</td></tr>
                            <tr><th>Цвет заднего плана</th><td><div class="flex items-center gap-[6px]"><span class="h-2 w-[30px] rounded-xs bg-black"></span>(0, 0, 0)</div></td></tr>
                            <tr><th>Макрос открытия экр</th><td>0</td></tr>
                            <tr><th>Макрос закрытия экр</th><td>0</td></tr>
                            <tr><th>Циклический макрос э</th><td>0</td></tr>
                            <tr><th>Ширина</th><td>320</td></tr>
                            <tr><th>Высота</th><td>240</td></tr>
                        </table>
                        <div class="flex h-[18px] w-4 shrink-0 flex-col items-center justify-around bg-[#f4f4f4]">
                            <i class="border-x-3 border-b-4 border-x-transparent border-b-[#b4b6b8]"></i>
                            <i class="border-x-3 border-t-4 border-x-transparent border-t-[#b4b6b8]"></i>
                        </div>
                    </div>
                </div>
                <div class="flex h-[24px] shrink-0 items-start font-['Liberation_Serif',serif] text-[12px]">
                    <button class="flex h-[22px] w-[75px] items-center gap-[6px] border-l border-[#90a0b8] bg-linear-to-b from-[#e6f0fa] via-[#bcd8f4] to-[#eef5fc] pl-2"><svg class="h-[15px] w-3" viewBox="0 0 12 15"><path fill="#e8eef6" stroke="#222c44" stroke-width="1.500" d="M1 2.500h10v11.500H1z"/><path fill="#556" d="M3 0h6v4H3z"/><path stroke="#333" d="M3 6.500h6M3 8.500h4M3 10.500h6"/></svg>Список</button>
                    <button class="flex h-[20px] w-[120px] items-center gap-[6px] rounded-tr border-r border-l border-t border-[#90a0b8] bg-linear-to-b from-[#f4f5fb] via-[#dcdff0] to-[#f4f5fb] pl-[3px]"><svg class="h-3 w-[15px]" viewBox="0 0 15 12"><path fill="#888b92" stroke="#5c5f66" d="M.5.500h14v11H.5z"/><path fill="#fff" d="M2 2h9v8H2z"/><path stroke="#fff" stroke-dasharray="1 1" d="M13 3v6"/></svg>Предв. просмотр</button>
                </div>
            </div>
        </aside>
    </main>

    <!-- Output panel -->
    <section class="mr-[2px] mt-[2px] flex h-[137px] shrink-0 flex-col border-b-2 border-r-2 border-l-2 border-[#b4b8be]">
        <div class="flex h-[18px] shrink-0 items-center justify-between rounded border border-[#6c7078] bg-[#ced2d6] pl-[5px]">
            <h2 class="font-['Liberation_Sans',sans-serif] text-[13px] font-bold">Output</h2>
            <div class="flex gap-[3px]">
                <button aria-label="Развернуть панель"><svg class="size-3" viewBox="0 0 12 12"><path fill="#fff" stroke="#000" d="M1.500 1.500h9v9h-9z"/><path fill="#000" d="M1 1h10v3H1z"/></svg></button>
                <button aria-label="Закрыть панель вывода"><svg class="size-3" viewBox="0 0 12 12"><path stroke="#000" stroke-width="2" d="M2 2l8 8M10 2l-8 8"/></svg></button>
            </div>
        </div>
        <div class="ml-[5px] mr-[3px] mt-[5px] flex h-[80px] shrink-0 border border-[#8492a8] bg-[#e9e6df]">
            <div class="flex-1 font-['Liberation_Sans',sans-serif] text-[13px]/[17px] font-bold text-[#3c0a40]">
                <div class="flex h-5 border-b border-[#d8d8d4] bg-linear-to-b from-white to-[#f3f3f2] text-black"><span class="w-[351px] border-r border-[#dcdcdc] pl-[10px] pt-[3px]">Show the error messages</span></div>
                <ul class="pt-px [&_li]:flex [&_li]:items-center [&_li]:gap-1 [&_li]:pl-[5px] [&_svg]:h-3 [&_svg]:w-[14px]">
                    <li><svg viewBox="0 0 14 12"><path fill="#3fc030" stroke="#1a6a18" d="M1 4h6V1l6 5-6 5V8H1z"/></svg>Текст (12, 100)</li>
                    <li><svg viewBox="0 0 14 12"><path fill="#3fc030" stroke="#1a6a18" d="M1 4h6V1l6 5-6 5V8H1z"/></svg>Текст (130, 217)</li>
                    <li><svg viewBox="0 0 14 12"><path fill="#3fc030" stroke="#1a6a18" d="M1 4h6V1l6 5-6 5V8H1z"/></svg>Компиляция выполнена</li>
                </ul>
            </div>
            <div class="flex w-[17px] flex-col items-center bg-linear-to-r from-[#f0f0f0] to-white py-[7px]">
                <i class="border-x-4 border-b-4 border-x-transparent border-b-[#7088a0]"></i>
                <i class="mt-auto h-[6px] w-[14px] rounded-xs border border-[#989aa0] bg-[#e8e8ea]"></i>
                <i class="mt-2 border-x-4 border-t-4 border-x-transparent border-t-[#7088a0]"></i>
            </div>
        </div>
        <div class="ml-[7px] flex items-start font-['Liberation_Serif',serif] text-[12px]">
            <button class="h-[21px] w-[45px] border-l border-[#90a0b8] bg-linear-to-b from-[#f4f5fb] via-[#dcdff0] to-[#f4f5fb]">Запись</button>
            <button class="h-[23px] w-[66px] rounded-tr border-x border-[#90a0b8] bg-linear-to-b from-[#e6f0fa] via-[#bcd8f4] to-[#eef5fc] pt-[2px]">Результат</button>
        </div>
    </section>

    <!-- Status bar -->
    <footer class="flex h-[19px] shrink-0 items-center border-t border-[#d0d2d6] bg-[#f3f3f3] *:flex *:h-full *:items-center *:border-l *:border-[#e2e2e2] *:pt-[2px]">
        <span class="ml-[324px] w-[108px] pl-1">Download:USB</span>
        <span class="w-[208px] pl-[10px]">[294,8]</span>
        <span class="w-[328px] pl-1">DOP-AS35THTD 65536 Colors</span>
        <span class="w-7"></span>
        <span class="w-[30px] pl-1">NUM</span>
        <span class="w-[34px]"></span>
        <span></span>
    </footer>

</body>
</html>
